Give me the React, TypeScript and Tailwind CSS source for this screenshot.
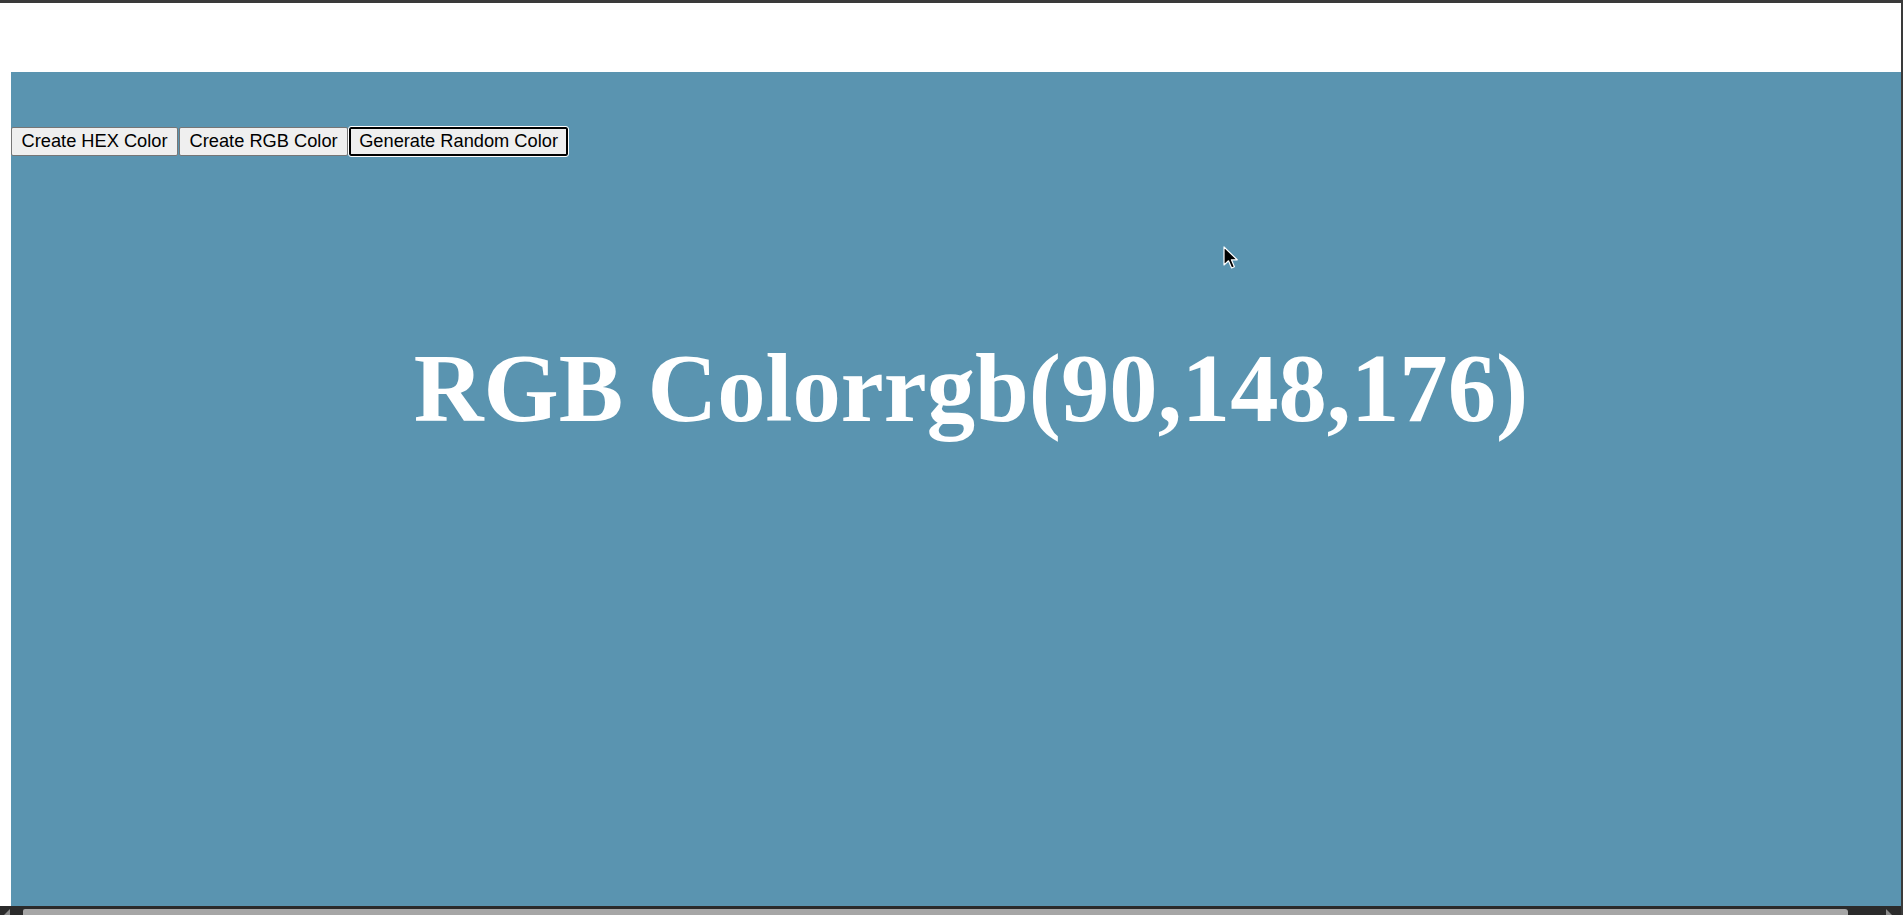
import React from "react";

const buttons = ["Create HEX Color", "Create RGB Color", "Generate Random Color"];

function Cursor() {
  return (
    <svg
      className="absolute left-[1223px] top-[243px]"
      width="16"
      height="24"
      viewBox="0 0 16 24"
    >
      <path
        d="M1 1 L1 19 L5.5 14.8 L8.6 22 L11.4 20.8 L8.4 13.8 L14.2 13.8 Z"
        fill="#000"
        stroke="#fff"
        strokeWidth="1.2"
        strokeLinejoin="round"
      />
    </svg>
  );
}

export default function App() {
  return (
    <div className="relative h-[915px] w-[1903px] overflow-hidden bg-white border-t-[3px] border-r-2 border-[#3a3a3a] flex flex-col">
      <div className="flex-1 flex flex-col pt-[69px] pl-[11px] min-h-0">
        <div className="flex-1 bg-[#5a94b0] overflow-hidden">
          <div className="w-[1920px] pt-[55px]">
            {/* button row */}
            <div className="flex gap-[1px] items-center">
              {buttons.map((label, i) => (
                <button
                  key={label}
                  className={`h-[29px] bg-[#efefef] text-black text-[18.25px] leading-none rounded-[2px] font-['Liberation_Sans',Arial,sans-serif] ${
                    i === 2
                      ? "px-[8px] border-2 border-black outline-[1.5px] outline-solid outline-white"
                      : "px-[9.5px] border border-[#767676]"
                  }`}
                >
                  {label}
                </button>
              ))}
            </div>
            <h1 className="mt-[185px] text-center text-white text-[96.7px] leading-none font-bold font-['Liberation_Serif','Times_New_Roman',serif]">
              RGB Colorrgb(90,148,176)
            </h1>
          </div>
        </div>
      </div>
      {/* horizontal scrollbar */}
      <div className="h-[9px] bg-[#2b2b2b] flex items-end shrink-0">
        <div className="w-[23px] h-full flex items-end pl-[4px]">
          <svg width="8" height="7" viewBox="0 0 8 7">
            <path d="M0 7 L6 1 L6 7 Z" fill="#8a8a8a" />
          </svg>
        </div>
        <div className="w-[1825px] h-[6px] bg-[#a6a6a6] rounded-tl-[2px] rounded-tr-[3px]" />
        <div className="flex-1 h-full flex items-end justify-end pr-[8px]">
          <svg width="8" height="7" viewBox="0 0 8 7">
            <path d="M1 1 L7 7 L1 7 Z" fill="#8a8a8a" />
          </svg>
        </div>
      </div>
      <Cursor />
    </div>
  );
}
